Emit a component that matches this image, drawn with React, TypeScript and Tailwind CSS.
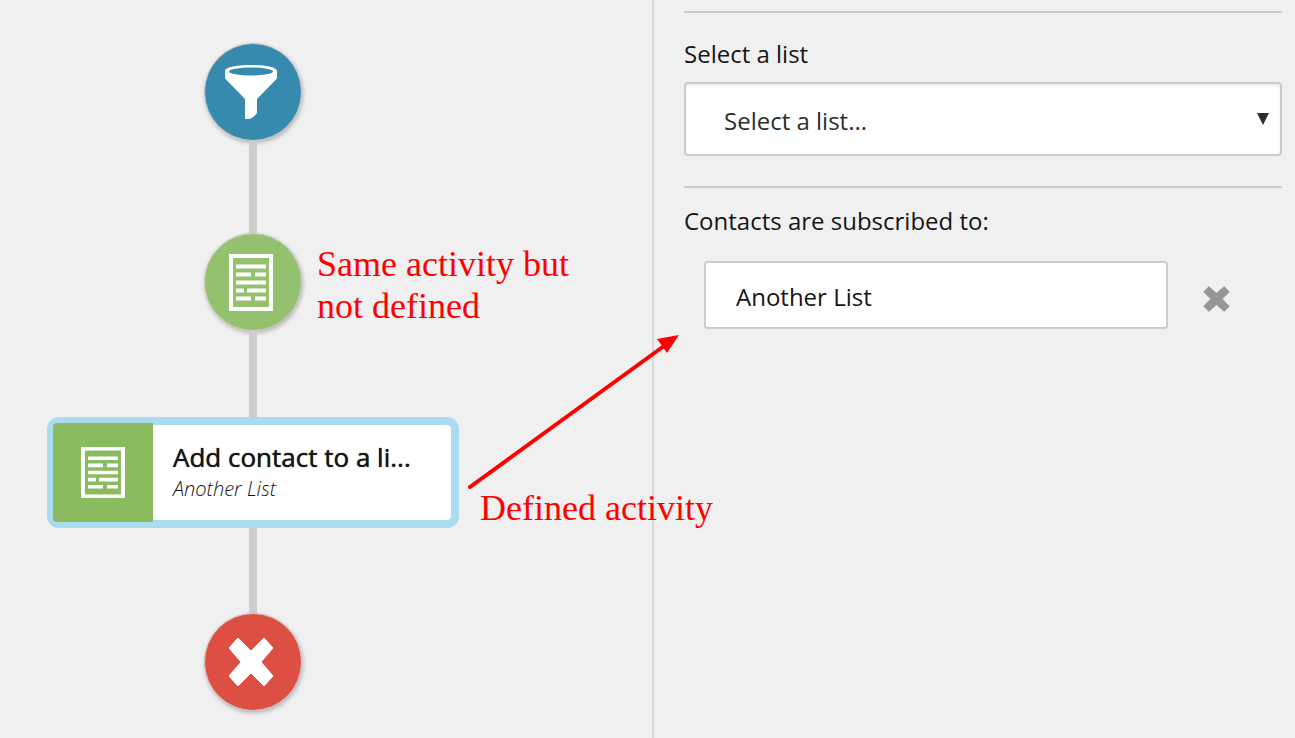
import type { ReactNode } from "react";

function FunnelIcon() {
  return (
    <svg viewBox="0 0 52 54" className="h-[54px] w-[52px]" aria-hidden="true">
      <path
        d="M0 6C0 2.500 10 0 26 0s26 2.500 26 6v6.500c0 1-.5 1.500-1 2L32 34v13c0 2-5 7-9 7h-3V34L1 14.500c-.5-.5-1-1-1-2Z"
        fill="#fff"
      />
      <ellipse cx="26" cy="6.500" rx="22" ry="4" fill="#358aae" />
    </svg>
  );
}

function ListIcon({ className }: { className: string }) {
  return (
    <svg
      viewBox="0 0 44 57"
      preserveAspectRatio="none"
      className={className}
      aria-hidden="true"
    >
      <rect x="2" y="2" width="40" height="53" fill="none" stroke="#fff" strokeWidth="4" />
      <path
        d="M7 12.500H37M7 20.500H22M26 20.500H37M7 28.500H37M7 36.500H15M18 36.500H37M7 44.500H22M26 44.500H37"
        stroke="#fff"
        strokeWidth="4"
      />
    </svg>
  );
}

function CrossIcon({ className }: { className: string }) {
  return (
    <svg viewBox="0 0 46 50" preserveAspectRatio="none" className={className} aria-hidden="true">
      <path
        d="M10 1 23 14 36 1 45 11 33 25 45 39 36 49 23 36 10 49 1 39 13 25 1 11Z"
        fill="currentColor"
        stroke="currentColor"
        strokeLinejoin="round"
      />
    </svg>
  );
}

function Node({ label, color, children }: { label: string; color: string; children: ReactNode }) {
  return (
    <button
      type="button"
      aria-label={label}
      className={`flex size-[98px] shrink-0 items-center justify-center rounded-full border border-[#cdcdcd] pr-1 text-white shadow-[1px_2px_4px_rgba(0,0,0,0.25)] ${color}`}
    >
      {children}
    </button>
  );
}

function Connector({ className }: { className: string }) {
  return <div className={`w-2 shrink-0 bg-[#cdcdcd] ${className}`} />;
}

function Workflow() {
  return (
    <section className="w-[654px] shrink-0 border-r-2 border-[#d8d8d8] pt-[43px] pl-[47px]">
      <div className="flex w-[412px] flex-col items-center">
        <Node label="Filter" color="bg-[#358aae]">
          <FunnelIcon />
        </Node>
        <Connector className="h-[92px]" />
        <Node label="Add contact to a list" color="bg-[#94c16e]">
          <ListIcon className="h-[57px] w-[44px]" />
        </Node>
        <Connector className="h-[86px]" />
        <button
          type="button"
          className="flex h-[111px] w-full shrink-0 rounded-xl border-8 border-[#aadbee] bg-white text-left text-[#151515]"
        >
          <span className="-my-0.5 -ml-0.5 flex w-[100px] shrink-0 items-center justify-center self-stretch rounded-l-sm bg-[#8abb5e]">
            <ListIcon className="h-[51px] w-[44px]" />
          </span>
          <span className="flex min-w-0 flex-col self-center pl-5">
            <span className="text-[26px] leading-8 font-medium [text-shadow:0_0_1px_#151515]">
              Add contact to a li...
            </span>
            <span className="text-[20px] leading-8 font-light italic">Another List</span>
          </span>
        </button>
        <Connector className="h-[85px]" />
        <Node label="End" color="bg-[#dd4f43]">
          <CrossIcon className="h-[50px] w-[46px]" />
        </Node>
      </div>
    </section>
  );
}

function Settings() {
  return (
    <section className="min-w-0 flex-1 pt-[11px] pr-[13px] pl-[30px] text-[24px] text-[#151515]">
      <div className="border-y-2 border-[#cbcbcb] pt-6 pb-[30px]">
        <label htmlFor="list" className="block leading-[34px]">
          Select a list
        </label>
        <div className="relative mt-[11px]">
          <select
            id="list"
            className="h-[74px] w-full appearance-none rounded border-2 border-[#cbcbcb] bg-white pt-1 pl-[38px] text-[#2d2d2d] shadow-[inset_0_2px_3px_rgba(0,0,0,0.08)]"
          >
            <option>Select a list...</option>
          </select>
          <svg
            viewBox="0 0 12 12"
            className="pointer-events-none absolute top-[31px] right-[13px] size-3"
            aria-hidden="true"
          >
            <path d="M0 0h12L6 12Z" fill="#2d2d2d" />
          </svg>
        </div>
      </div>
      <label htmlFor="subscribed" className="mt-4 block leading-[34px]">
        Contacts are subscribed to:
      </label>
      <div className="mt-[23px] flex items-center pr-[52px] pl-5">
        <input
          id="subscribed"
          readOnly
          value="Another List"
          className="h-[68px] min-w-0 flex-1 rounded border-2 border-[#cbcbcb] bg-white px-[30px] pt-0.5"
        />
        <button type="button" aria-label="Remove list" className="ml-[35px] pt-2 text-[#969696]">
          <CrossIcon className="h-[26px] w-[27px]" />
        </button>
      </div>
    </section>
  );
}

// Notes drawn on top of the workflow canvas
function Annotations() {
  return (
    <div className="pointer-events-none absolute inset-0 font-['Liberation_Serif',serif] text-[36px] leading-[42px] text-[#ff0000]">
      <p className="absolute top-[243px] left-[317px]">
        Same activity but
        <br />
        not defined
      </p>
      <svg viewBox="0 0 212 156" className="absolute top-[334px] left-[468px] h-[156px] w-[212px]" aria-hidden="true">
        <path d="M2 153 196 12" stroke="#ff0000" strokeWidth="4" strokeLinecap="round" />
        <path d="M211 1 189 5 199 19Z" fill="#ff0000" />
      </svg>
      <p className="absolute top-[487px] left-[480px]">Defined activity</p>
    </div>
  );
}

export default function App() {
  return (
    <main className="relative flex min-h-screen bg-[#f0f0f0] font-['Open_Sans',sans-serif]">
      <Workflow />
      <Settings />
      <Annotations />
    </main>
  );
}
